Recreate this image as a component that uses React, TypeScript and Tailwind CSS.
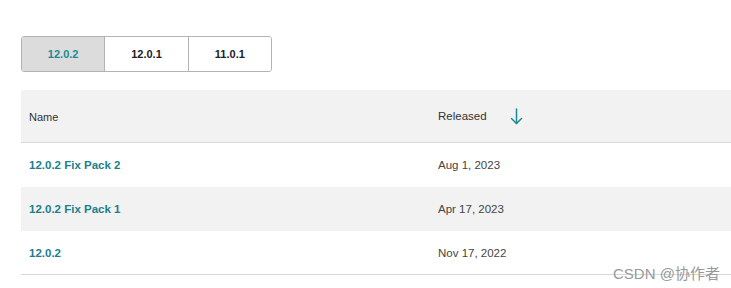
import React from "react";

const versions = ["12.0.2", "12.0.1", "11.0.1"];

const rows = [
  { name: "12.0.2 Fix Pack 2", date: "Aug 1, 2023" },
  { name: "12.0.2 Fix Pack 1", date: "Apr 17, 2023" },
  { name: "12.0.2", date: "Nov 17, 2022" },
];

function ArrowDown() {
  return (
    <svg width="13" height="17" viewBox="0 0 13 17" fill="none" stroke="#1b8a94" strokeWidth="1.5" strokeLinecap="round" strokeLinejoin="round">
      <path d="M6.5 1v14.5" />
      <path d="M1.5 10.5l5 5 5-5" />
    </svg>
  );
}

export default function App() {
  return (
    <div className="relative w-[731px] h-[288px] bg-white overflow-hidden" style={{ fontFamily: '"Liberation Sans", Arial, sans-serif' }}>
      <div className="pt-[36px] pl-[21px]">
        <div className="flex w-[251px] h-[36px] border border-[#b3b3b3] rounded-[3px] overflow-hidden">
          {versions.map((v, i) => (
            <div
              key={v}
              className={
                "flex-1 flex items-center justify-center text-[11px] font-bold " +
                (i === 0 ? "bg-[#dcdcdc] text-[#1b8a94]" : "bg-white text-[#222]") +
                (i > 0 ? " border-l border-[#b3b3b3]" : "")
              }
            >
              {v}
            </div>
          ))}
        </div>
      </div>

      <div className="ml-[21px] mt-[18px]">
        <div className="flex h-[53px] items-center pt-[2px] bg-[#f2f2f2] border-b border-[#dcdcdc] text-[11px] text-[#333]">
          <div className="w-[409px] pl-[8px]">Name</div>
          <div className="flex items-center pl-[8px] text-[11.5px]">
            <span>Released</span>
            <span className="ml-[23px] mt-[-2px] flex"><ArrowDown /></span>
          </div>
        </div>
        {rows.map((r, i) => (
          <div
            key={r.name}
            className={"flex h-[44px] items-center pt-[2px] " + (i === 1 ? "bg-[#f2f2f2]" : "bg-white") + (i === rows.length - 1 ? " border-b border-[#d6d6d6]" : "")}
          >
            <div className="w-[409px] pl-[8px] text-[11.5px] font-bold text-[#1b7f8b]">{r.name}</div>
            <div className="pl-[8px] text-[11.5px] text-[#444]">{r.date}</div>
          </div>
        ))}
      </div>

      <div className="absolute left-[613px] top-[263px] text-[15px] text-[#999]" style={{ fontFamily: '"Liberation Sans", "Noto Sans CJK SC", sans-serif' }}>
        CSDN @协作者
      </div>
    </div>
  );
}
